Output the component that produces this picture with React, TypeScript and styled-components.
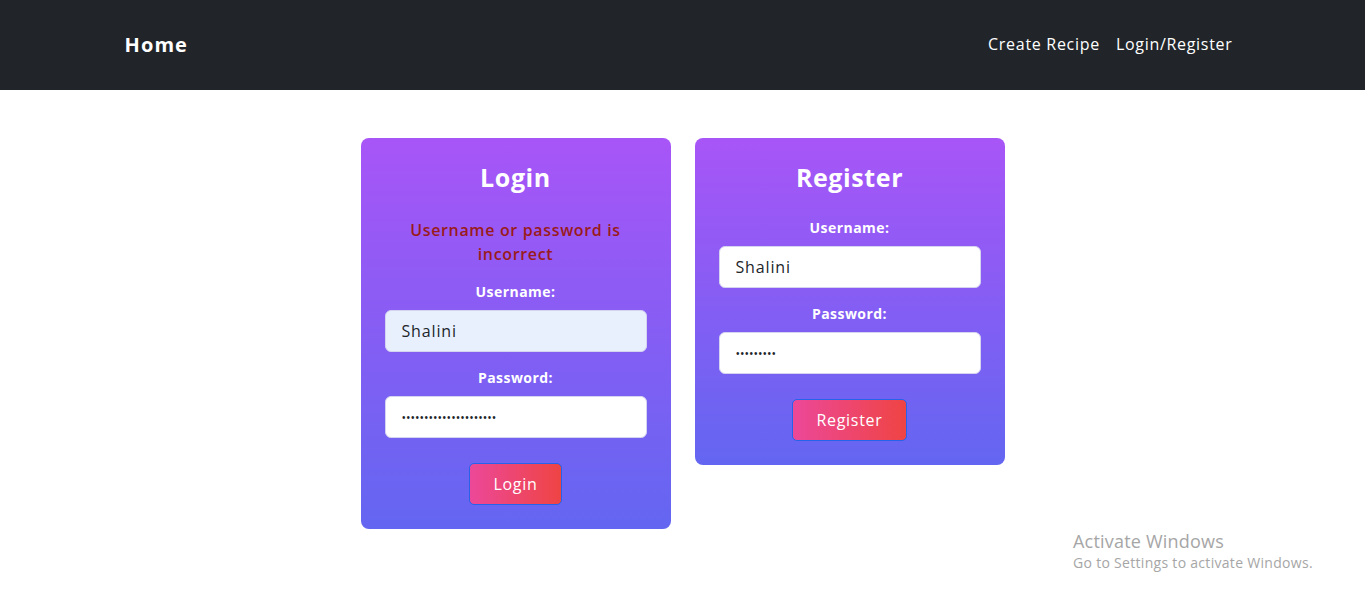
import React from 'react';
import styled, { createGlobalStyle } from 'styled-components';

const GlobalStyle = createGlobalStyle`
  body {
    margin: 0;
    background: #fff;
    font-family: "Open Sans", "Liberation Sans", sans-serif;
    color: #212529;
  }
  * {
    box-sizing: border-box;
  }
`;

const Navbar = styled.nav`
  background: #212529;
  height: 90px;
  display: flex;
  align-items: center;
`;

const NavContainer = styled.div`
  width: 1140px;
  margin: 0 auto;
  padding: 0 12px;
  display: flex;
  align-items: center;
  justify-content: space-between;
  margin-top: -2px;
`;

const Brand = styled.a`
  color: #fff;
  font-weight: 700;
  font-size: 20px;
  letter-spacing: 1.1px;
  text-decoration: none;
`;

const NavLinks = styled.div`
  display: flex;
`;

const NavLink = styled.a`
  color: #fff;
  font-size: 16px;
  letter-spacing: 0.7px;
  padding: 8px;
  text-decoration: none;
`;

const Main = styled.main`
  display: flex;
  justify-content: center;
  align-items: flex-start;
  gap: 24px;
  padding-top: 48px;
`;

const Card = styled.div`
  width: 310px;
  padding: 24px;
  border-radius: 8px;
  background: linear-gradient(to bottom, #a855f7, #6366f1);
  display: flex;
  flex-direction: column;
  align-items: center;
`;

const Title = styled.h2`
  margin: 0 0 26px;
  font-size: 25px;
  line-height: 30px;
  font-weight: 700;
  letter-spacing: 0.6px;
  color: #fff;
`;

const ErrorText = styled.p`
  margin: 0 0 16px;
  font-size: 16px;
  line-height: 24px;
  font-weight: 600;
  letter-spacing: 0.65px;
  color: #991b1b;
  text-align: center;
  padding: 0 10px;
`;

const Field = styled.div`
  width: 100%;
  display: flex;
  flex-direction: column;
  align-items: center;
  gap: 8px;
  margin-bottom: 16px;
`;

const Label = styled.label`
  font-size: 14px;
  line-height: 20px;
  font-weight: 700;
  letter-spacing: 0.45px;
  color: #fff;
`;

const Input = styled.input<{ $autofill?: boolean }>`
  width: 100%;
  height: 42px;
  padding: 0 16px;
  border: 1px solid #d4d4f0;
  border-radius: 6px;
  background: ${(p) => (p.$autofill ? '#e8f0fe' : '#fff')};
  font-family: "Open Sans", "Liberation Sans", sans-serif;
  font-size: 16px;
  letter-spacing: 0.85px;
  color: #212529;
  outline: none;
  &[type='password'] {
    font-size: 12px;
    letter-spacing: 0px;
  }
`;

const Button = styled.button`
  margin-top: 9px;
  height: 42px;
  padding: 0 23px;
  border: 1px solid #2563eb;
  border-radius: 5px;
  background: linear-gradient(to right, #ec4899, #ef4444);
  color: #fff;
  font-family: "Open Sans", "Liberation Sans", sans-serif;
  font-size: 16px;
  letter-spacing: 0.7px;
  cursor: pointer;
`;

const Watermark = styled.div`
  position: absolute;
  left: 1073px;
  top: 529px;
  color: #a6a6a6;
  font-family: "Open Sans", "Noto Sans", sans-serif;
`;

const WatermarkTitle = styled.div`
  font-size: 18px;
  line-height: 24px;
  letter-spacing: 0.2px;
`;

const WatermarkSub = styled.div`
  font-size: 14px;
  line-height: 20px;
  letter-spacing: 0.3px;
`;

const noop = () => {};

export default function App() {
  return (
    <>
      <GlobalStyle />
      <Navbar>
        <NavContainer>
          <Brand href="#">Home</Brand>
          <NavLinks>
            <NavLink href="#">Create Recipe</NavLink>
            <NavLink href="#">Login/Register</NavLink>
          </NavLinks>
        </NavContainer>
      </Navbar>
      <Main>
        <Card>
          <Title>Login</Title>
          <ErrorText>Username or password is incorrect</ErrorText>
          <Field>
            <Label>Username:</Label>
            <Input $autofill value="Shalini" onChange={noop} />
          </Field>
          <Field>
            <Label>Password:</Label>
            <Input type="password" value="xxxxxxxxxxxxxxxxxxxxx" onChange={noop} />
          </Field>
          <Button>Login</Button>
        </Card>
        <Card>
          <Title>Register</Title>
          <Field>
            <Label>Username:</Label>
            <Input value="Shalini" onChange={noop} />
          </Field>
          <Field>
            <Label>Password:</Label>
            <Input type="password" value="xxxxxxxxx" onChange={noop} />
          </Field>
          <Button>Register</Button>
        </Card>
      </Main>
      <Watermark>
        <WatermarkTitle>Activate Windows</WatermarkTitle>
        <WatermarkSub>Go to Settings to activate Windows.</WatermarkSub>
      </Watermark>
    </>
  );
}
